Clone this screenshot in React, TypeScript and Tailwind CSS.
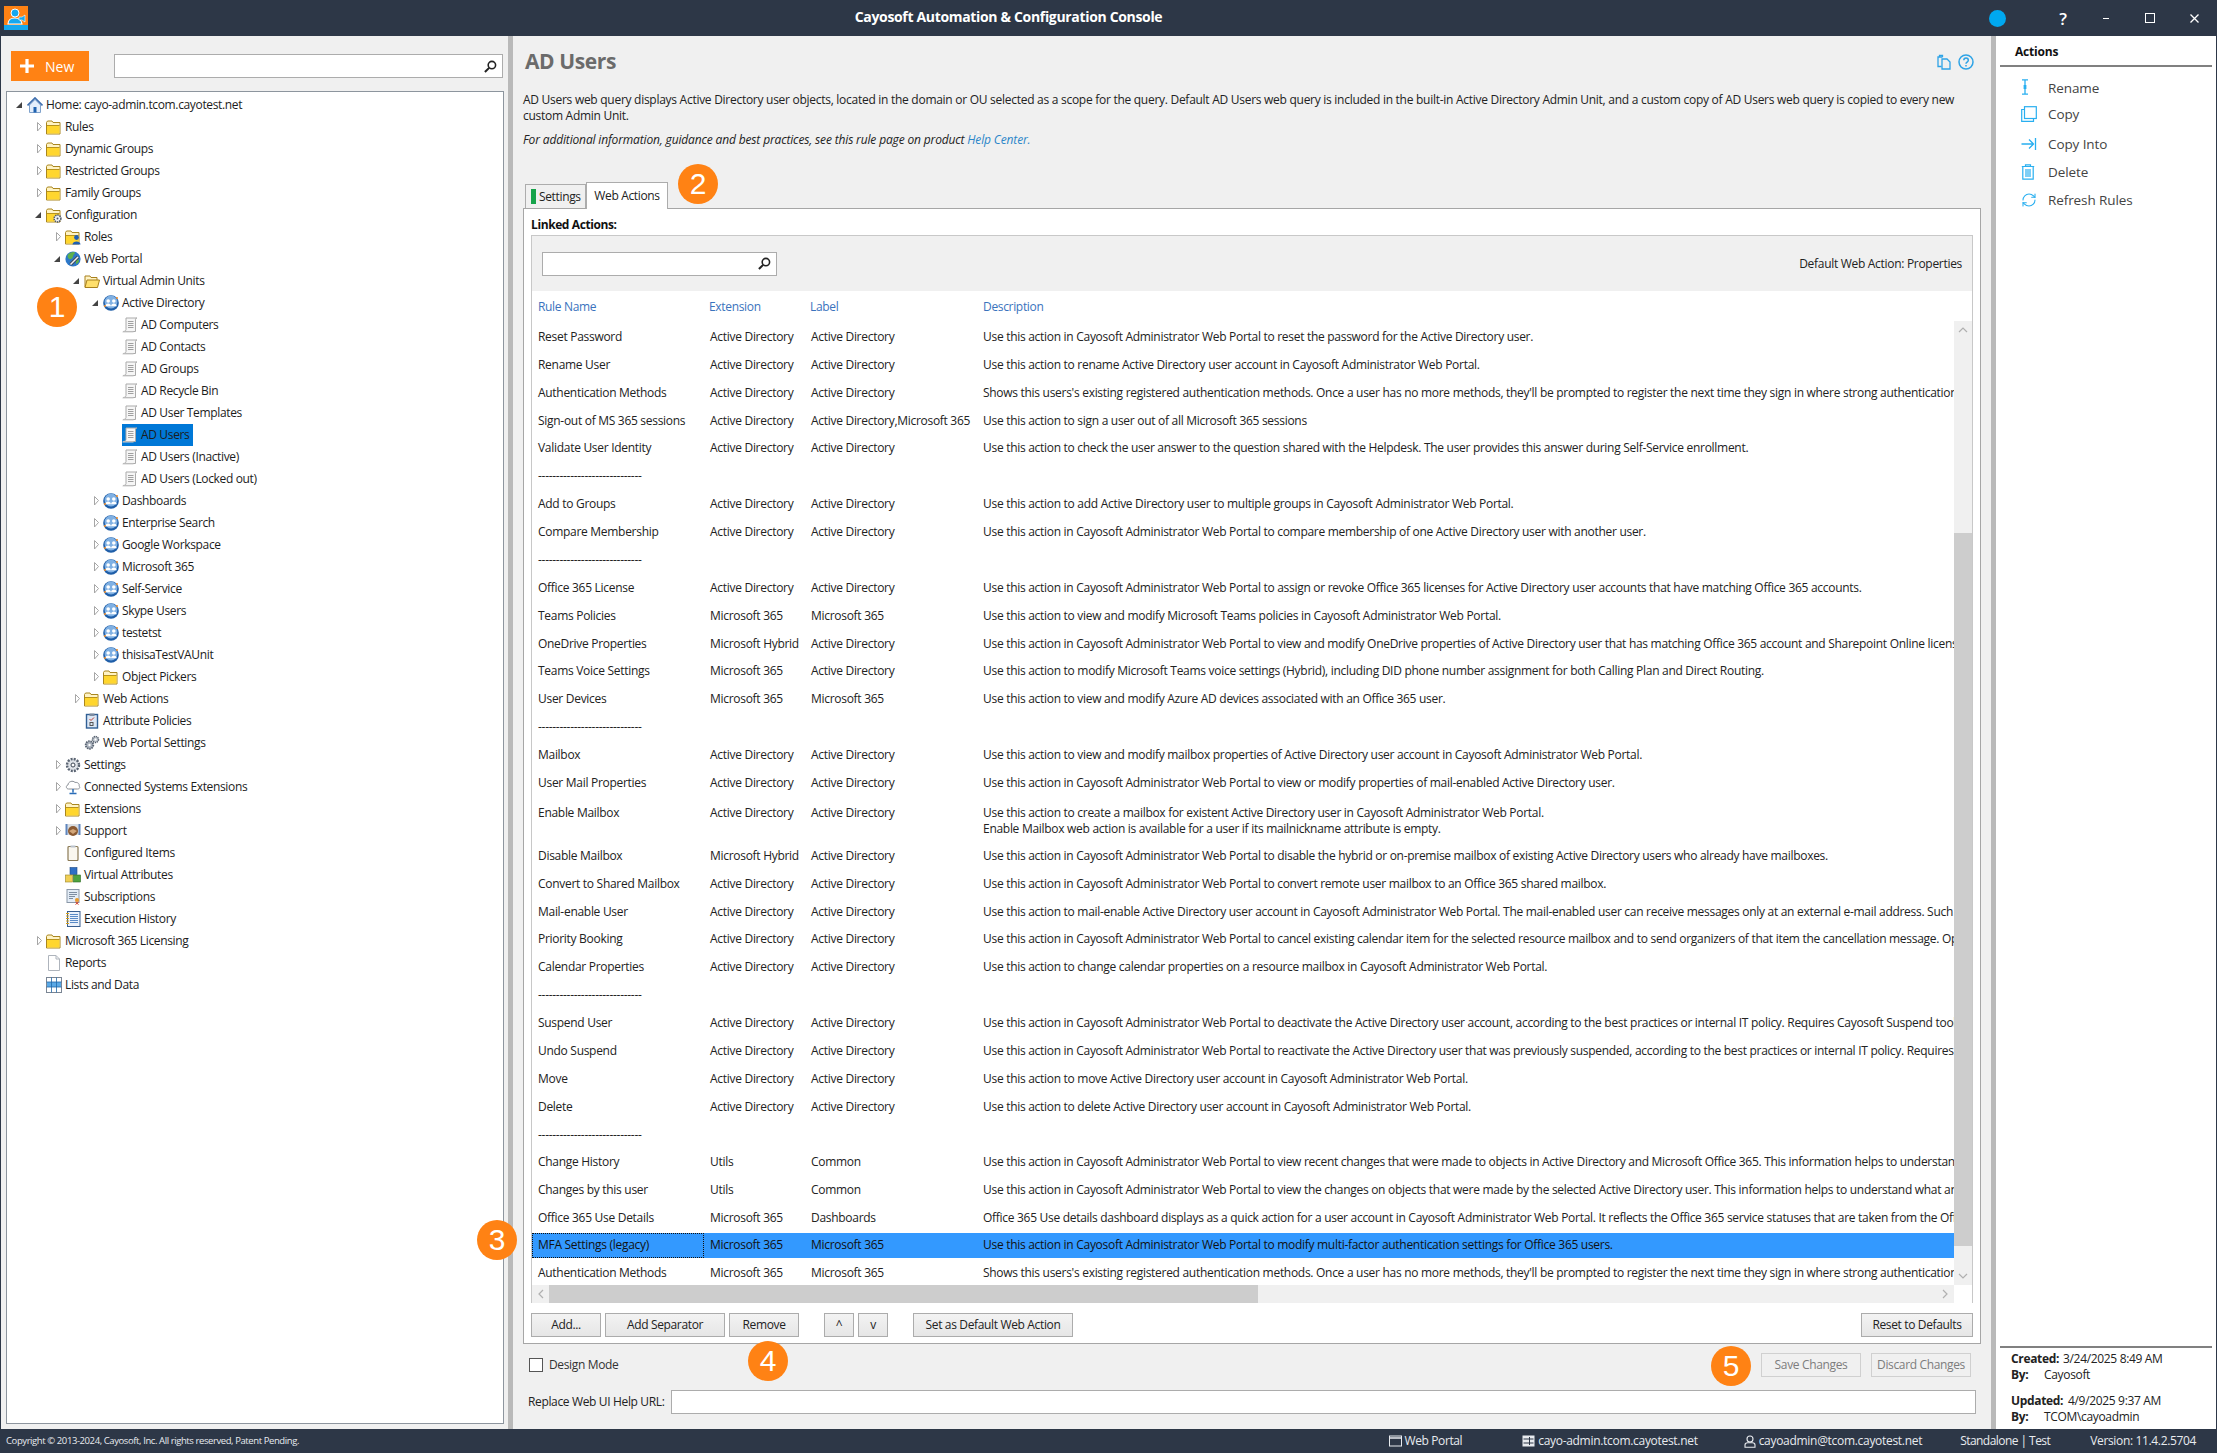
import { RefreshCw } from "lucide-react";
import type { ReactNode } from "react";

const FONT = "font-['Open_Sans','Noto_Sans',sans-serif]";

type IconName =
  | "home" | "folder" | "folderGear" | "folderUser" | "folderOpen" | "globeTool" | "group" | "scroll"
  | "policy" | "gears" | "gear" | "cloud" | "support" | "clipboard" | "cubes" | "cert" | "notebook"
  | "page" | "grid";

type TreeItem = { level: number; arrow?: "open" | "closed"; icon: IconName; text: string; selected?: boolean };

const tree: TreeItem[] = [
  { level: 0, arrow: "open", icon: "home", text: "Home: cayo-admin.tcom.cayotest.net" },
  { level: 1, arrow: "closed", icon: "folder", text: "Rules" },
  { level: 1, arrow: "closed", icon: "folder", text: "Dynamic Groups" },
  { level: 1, arrow: "closed", icon: "folder", text: "Restricted Groups" },
  { level: 1, arrow: "closed", icon: "folder", text: "Family Groups" },
  { level: 1, arrow: "open", icon: "folderGear", text: "Configuration" },
  { level: 2, arrow: "closed", icon: "folderUser", text: "Roles" },
  { level: 2, arrow: "open", icon: "globeTool", text: "Web Portal" },
  { level: 3, arrow: "open", icon: "folderOpen", text: "Virtual Admin Units" },
  { level: 4, arrow: "open", icon: "group", text: "Active Directory" },
  { level: 5, icon: "scroll", text: "AD Computers" },
  { level: 5, icon: "scroll", text: "AD Contacts" },
  { level: 5, icon: "scroll", text: "AD Groups" },
  { level: 5, icon: "scroll", text: "AD Recycle Bin" },
  { level: 5, icon: "scroll", text: "AD User Templates" },
  { level: 5, icon: "scroll", text: "AD Users", selected: true },
  { level: 5, icon: "scroll", text: "AD Users (Inactive)" },
  { level: 5, icon: "scroll", text: "AD Users (Locked out)" },
  { level: 4, arrow: "closed", icon: "group", text: "Dashboards" },
  { level: 4, arrow: "closed", icon: "group", text: "Enterprise Search" },
  { level: 4, arrow: "closed", icon: "group", text: "Google Workspace" },
  { level: 4, arrow: "closed", icon: "group", text: "Microsoft 365" },
  { level: 4, arrow: "closed", icon: "group", text: "Self-Service" },
  { level: 4, arrow: "closed", icon: "group", text: "Skype Users" },
  { level: 4, arrow: "closed", icon: "group", text: "testetst" },
  { level: 4, arrow: "closed", icon: "group", text: "thisisaTestVAUnit" },
  { level: 4, arrow: "closed", icon: "folder", text: "Object Pickers" },
  { level: 3, arrow: "closed", icon: "folder", text: "Web Actions" },
  { level: 3, icon: "policy", text: "Attribute Policies" },
  { level: 3, icon: "gears", text: "Web Portal Settings" },
  { level: 2, arrow: "closed", icon: "gear", text: "Settings" },
  { level: 2, arrow: "closed", icon: "cloud", text: "Connected Systems Extensions" },
  { level: 2, arrow: "closed", icon: "folder", text: "Extensions" },
  { level: 2, arrow: "closed", icon: "support", text: "Support" },
  { level: 2, icon: "clipboard", text: "Configured Items" },
  { level: 2, icon: "cubes", text: "Virtual Attributes" },
  { level: 2, icon: "cert", text: "Subscriptions" },
  { level: 2, icon: "notebook", text: "Execution History" },
  { level: 1, arrow: "closed", icon: "folder", text: "Microsoft 365 Licensing" },
  { level: 1, icon: "page", text: "Reports" },
  { level: 1, icon: "grid", text: "Lists and Data" },
];

const levelPad = ["pl-[5px]", "pl-[24px]", "pl-[43px]", "pl-[62px]", "pl-[81px]", "pl-[100px]"];

const P = "Cayosoft Administrator Web Portal";
const AD = "Active Directory";
const M = "Microsoft 365";
const SEP = "-----------------------------";

type Row = { name: string; ext?: string; label?: string; desc?: ReactNode; tall?: boolean; selected?: boolean };

const AUTH = "Shows this users's existing registered authentication methods. Once a user has no more methods, they'll be prompted to register the next time they sign in where strong authentication is required.";

const rows: Row[] = [
  { name: "Reset Password", ext: AD, label: AD, desc: `Use this action in ${P} to reset the password for the Active Directory user.` },
  { name: "Rename User", ext: AD, label: AD, desc: `Use this action to rename Active Directory user account in ${P}.` },
  { name: "Authentication Methods", ext: AD, label: AD, desc: AUTH },
  { name: "Sign-out of MS 365 sessions", ext: AD, label: "Active Directory,Microsoft 365", desc: "Use this action to sign a user out of all Microsoft 365 sessions" },
  { name: "Validate User Identity", ext: AD, label: AD, desc: "Use this action to check the user answer to the question shared with the Helpdesk. The user provides this answer during Self-Service enrollment." },
  { name: SEP },
  { name: "Add to Groups", ext: AD, label: AD, desc: `Use this action to add Active Directory user to multiple groups in ${P}.` },
  { name: "Compare Membership", ext: AD, label: AD, desc: `Use this action in ${P} to compare membership of one Active Directory user with another user.` },
  { name: SEP },
  { name: "Office 365 License", ext: AD, label: AD, desc: `Use this action in ${P} to assign or revoke Office 365 licenses for Active Directory user accounts that have matching Office 365 accounts.` },
  { name: "Teams Policies", ext: M, label: M, desc: `Use this action to view and modify Microsoft Teams policies in ${P}.` },
  { name: "OneDrive Properties", ext: "Microsoft Hybrid", label: AD, desc: `Use this action in ${P} to view and modify OneDrive properties of Active Directory user that has matching Office 365 account and Sharepoint Online license.` },
  { name: "Teams Voice Settings", ext: M, label: AD, desc: "Use this action to modify Microsoft Teams voice settings (Hybrid), including DID phone number assignment for both Calling Plan and Direct Routing." },
  { name: "User Devices", ext: M, label: M, desc: "Use this action to view and modify Azure AD devices associated with an Office 365 user." },
  { name: SEP },
  { name: "Mailbox", ext: AD, label: AD, desc: `Use this action to view and modify mailbox properties of Active Directory user account in ${P}.` },
  { name: "User Mail Properties", ext: AD, label: AD, desc: `Use this action in ${P} to view or modify properties of mail-enabled Active Directory user.` },
  {
    name: "Enable Mailbox", ext: AD, label: AD, tall: true,
    desc: (
      <>
        Use this action to create a mailbox for existent Active Directory user in {P}.
        <br />
        Enable Mailbox web action is available for a user if its mailnickname attribute is empty.
      </>
    ),
  },
  { name: "Disable Mailbox", ext: "Microsoft Hybrid", label: AD, desc: `Use this action in ${P} to disable the hybrid or on-premise mailbox of existing Active Directory users who already have mailboxes.` },
  { name: "Convert to Shared Mailbox", ext: AD, label: AD, desc: `Use this action in ${P} to convert remote user mailbox to an Office 365 shared mailbox.` },
  { name: "Mail-enable User", ext: AD, label: AD, desc: `Use this action to mail-enable Active Directory user account in ${P}. The mail-enabled user can receive messages only at an external e-mail address. Such users` },
  { name: "Priority Booking", ext: AD, label: AD, desc: `Use this action in ${P} to cancel existing calendar item for the selected resource mailbox and to send organizers of that item the cancellation message. Optionally` },
  { name: "Calendar Properties", ext: AD, label: AD, desc: `Use this action to change calendar properties on a resource mailbox in ${P}.` },
  { name: SEP },
  { name: "Suspend User", ext: AD, label: AD, desc: `Use this action in ${P} to deactivate the Active Directory user account, according to the best practices or internal IT policy. Requires Cayosoft Suspend tool` },
  { name: "Undo Suspend", ext: AD, label: AD, desc: `Use this action in ${P} to reactivate the Active Directory user that was previously suspended, according to the best practices or internal IT policy. Requires Cayosoft` },
  { name: "Move", ext: AD, label: AD, desc: `Use this action to move Active Directory user account in ${P}.` },
  { name: "Delete", ext: AD, label: AD, desc: `Use this action to delete Active Directory user account in ${P}.` },
  { name: SEP },
  { name: "Change History", ext: "Utils", label: "Common", desc: `Use this action in ${P} to view recent changes that were made to objects in Active Directory and Microsoft Office 365. This information helps to understand what` },
  { name: "Changes by this user", ext: "Utils", label: "Common", desc: `Use this action in ${P} to view the changes on objects that were made by the selected Active Directory user. This information helps to understand what and` },
  { name: "Office 365 Use Details", ext: M, label: "Dashboards", desc: `Office 365 Use details dashboard displays as a quick action for a user account in ${P}. It reflects the Office 365 service statuses that are taken from the Office` },
  { name: "MFA Settings (legacy)", ext: M, label: M, selected: true, desc: `Use this action in ${P} to modify multi-factor authentication settings for Office 365 users.` },
  { name: "Authentication Methods", ext: M, label: M, desc: AUTH },
];

function TreeIcon({ name }: { name: IconName }) {
  const folder = (
    <>
      <path d="M.5 3.500V15h13.500V3.500H7L6 2H1.500z" fill="#fff3c4" stroke="#a9861f" />
      <rect x="1" y="7" width="12.500" height="7.500" fill="#ffd62e" />
      <path d="M1 6.500h12.500" stroke="#b8941e" />
    </>
  );
  switch (name) {
    case "home":
      return (
        <svg viewBox="0 0 16 16" className="h-4 w-4">
          <path d="M2.500 8v7.500h11V8L8 2.500z" fill="#e4eefb" stroke="#7fa2cc" />
          <path d="M.5 8.500 8 1l7.500 7.500" fill="none" stroke="#3f6fae" strokeWidth="1.700" />
          <rect x="6.500" y="10" width="3" height="5.500" fill="#1f62b0" />
        </svg>
      );
    case "folder":
      return <svg viewBox="0 0 16 16" className="h-4 w-4">{folder}</svg>;
    case "folderGear":
      return (
        <svg viewBox="0 0 16 16" className="h-4 w-4">
          {folder}
          <circle cx="11.500" cy="11.500" r="3.400" fill="#eef1f5" stroke="#4a5568" strokeWidth="1.500" strokeDasharray="1.400 .8" />
          <circle cx="11.500" cy="11.500" r="1" fill="#4a5568" />
        </svg>
      );
    case "folderUser":
      return (
        <svg viewBox="0 0 16 16" className="h-4 w-4">
          {folder}
          <circle cx="11.500" cy="8.500" r="2.400" fill="#1f5fb4" />
          <path d="M7.500 15.500c0-4 8-4 8 0z" fill="#1f5fb4" />
        </svg>
      );
    case "folderOpen":
      return (
        <svg viewBox="0 0 16 16" className="h-4 w-4">
          <path d="M1 14V3h5l1 1.500h6V7" fill="#fff3c4" stroke="#a8801c" />
          <path d="M1 14.500 3 7h12.500l-2 7.500z" fill="#ffdf6b" stroke="#a8801c" />
        </svg>
      );
    case "globeTool":
      return (
        <svg viewBox="0 0 16 16" className="h-4 w-4">
          <circle cx="8" cy="8" r="7.600" fill="#2c78c9" />
          <path d="M3 3.500c2-2 5-3 7-2 0 2-2 2-2 4S5 9 4 8 2 6 3 3.500zM11 9c2-1 3 0 3 1s-2 3-3 3z" fill="#5cb04e" />
          <path d="M5.500 13.500 13 6" stroke="#3f4a58" strokeWidth="3.200" />
          <path d="M5.500 13.500 13 6" stroke="#eef0f3" strokeWidth="1.400" />
        </svg>
      );
    case "group":
      return (
        <svg viewBox="0 0 16 16" className="h-4 w-4">
          <circle cx="8" cy="8" r="7.800" fill="#1f5ea8" />
          <circle cx="8" cy="7" r="6.400" fill="#7fb0e3" />
          <circle cx="5.200" cy="6" r="1.800" fill="#fff" />
          <circle cx="10.800" cy="6" r="1.800" fill="#fff" />
          <path d="M2.300 11.200c0-3.700 5.600-3.700 5.600 0zM8.100 11.200c0-3.700 5.600-3.700 5.600 0z" fill="#fff" />
          <circle cx="14" cy="3" r="1" fill="#f28c28" />
          <circle cx="2" cy="11" r="1" fill="#f28c28" />
        </svg>
      );
    case "scroll":
      return (
        <svg viewBox="0 0 16 16" className="h-4 w-4">
          <path d="M4 1h11c-1.200 0-1.500 1-1.500 2v11.500H1c1.500 0 3-.5 3-2z" fill="#f6f6f6" stroke="#aaa" />
          <path d="M6 4.500h5.500M6 6.500h5.500M6 8.500h5.500M6 10.500h5.500" stroke="#a0a0a0" />
          <path d="M.5 15h11" stroke="#cfcfcf" />
        </svg>
      );
    case "policy":
      return (
        <svg viewBox="0 0 16 16" className="h-4 w-4">
          <rect x="2.500" y="1.500" width="11" height="13.500" fill="#dbe7f5" stroke="#305f95" strokeWidth="1.400" />
          <rect x="5.500" y=".5" width="5" height="2.500" fill="#7c8ba0" />
          <path d="M5.500 6l1.500 1.500L10 4.500" fill="none" stroke="#c0392b" />
          <rect x="6" y="9.500" width="3" height="3" fill="none" stroke="#555" />
        </svg>
      );
    case "gears":
      return (
        <svg viewBox="0 0 16 16" className="h-4 w-4">
          <circle cx="5.500" cy="10" r="3.800" fill="#aab2bd" stroke="#5a6472" strokeWidth="1.800" strokeDasharray="1.500 .8" />
          <circle cx="11.500" cy="4.500" r="3" fill="#c1c7cf" stroke="#5a6472" strokeWidth="1.500" strokeDasharray="1.300 .7" />
          <circle cx="5.500" cy="10" r="1.200" fill="#fff" />
          <circle cx="11.500" cy="4.500" r="1" fill="#fff" />
        </svg>
      );
    case "gear":
      return (
        <svg viewBox="0 0 16 16" className="h-4 w-4">
          <circle cx="8" cy="8" r="6" fill="#dfe3e8" stroke="#5a6472" strokeWidth="2.400" strokeDasharray="2 1.140" />
          <circle cx="8" cy="8" r="2" fill="#fff" stroke="#3d4653" />
        </svg>
      );
    case "cloud":
      return (
        <svg viewBox="0 0 16 16" className="h-4 w-4">
          <path d="M3.500 10C1 10 .5 6.500 3 6c0-3.500 5-5 7-2.500C12.500 2.800 15 5 14 7c1.500 1.500.5 3-1.500 3z" fill="#fff" stroke="#8a8f96" />
          <path d="M8 10v3.500M4.500 14.500h7" stroke="#2a6db8" strokeWidth="1.500" />
        </svg>
      );
    case "support":
      return (
        <svg viewBox="0 0 16 16" className="h-4 w-4">
          <rect x=".5" y="1" width="15" height="11" fill="#5f85bd" />
          <rect x="2.500" y="1" width="11" height="11" fill="#d8dde3" />
          <circle cx="8" cy="8" r="5" fill="#8a5a33" />
          <path d="M4 8l4-2 4 2-4 3z" fill="#d2a679" />
        </svg>
      );
    case "clipboard":
      return (
        <svg viewBox="0 0 16 16" className="h-4 w-4">
          <rect x="3" y="1.500" width="10" height="14" rx="1" fill="#faf7ef" stroke="#8b7a55" strokeWidth="1.200" />
          <rect x="5.500" y=".5" width="5" height="2" fill="#b9c2cc" />
        </svg>
      );
    case "cubes":
      return (
        <svg viewBox="0 0 16 16" className="h-4 w-4">
          <rect x="5" y=".5" width="7" height="7" fill="#2f6fc4" stroke="#1f4a85" strokeWidth=".6" />
          <rect x=".5" y="8" width="7" height="7" fill="#f0cf55" stroke="#9c8526" strokeWidth=".6" />
          <rect x="8.500" y="8" width="7" height="7" fill="#4ea33f" stroke="#2c6a22" strokeWidth=".6" />
        </svg>
      );
    case "cert":
      return (
        <svg viewBox="0 0 16 16" className="h-4 w-4">
          <rect x="2" y=".5" width="12" height="13" fill="#e3ecf6" stroke="#8a97a8" />
          <path d="M4 3.500h8M4 5.500h8M4 7.500h6M4 9.500h4" stroke="#7d8da1" />
          <circle cx="12" cy="11" r="2" fill="#e89a2c" />
          <path d="M10.500 13l3 2.500m0-2.500l-3 2.500" stroke="#d23c2a" />
        </svg>
      );
    case "notebook":
      return (
        <svg viewBox="0 0 16 16" className="h-4 w-4">
          <rect x="2.500" y=".5" width="12.500" height="15" fill="#eaf1fb" stroke="#395f91" />
          <path d="M5 3.500h8M5 5.500h8M5 7.500h8M5 9.500h8M5 11.500h8" stroke="#5a8ac6" />
          <path d="M1 2.500h3M1 5h3M1 7.500h3M1 10h3M1 12.500h3" stroke="#d9a11c" />
        </svg>
      );
    case "page":
      return (
        <svg viewBox="0 0 16 16" className="h-4 w-4">
          <path d="M2.500.5h7.500l3.500 3.500v11.500h-11z" fill="#fff" stroke="#aeb4bc" />
          <path d="M10 .5V4h3.500" fill="none" stroke="#aeb4bc" />
        </svg>
      );
    case "grid":
      return (
        <svg viewBox="0 0 16 16" className="h-4 w-4">
          <rect x=".5" y=".5" width="15" height="15" fill="#fff" stroke="#7b8694" />
          <rect x="1" y="5" width="14" height="5" fill="#5aa9e6" />
          <path d="M5.500.5v15M10.500.5v15M.5 5h15M.5 10h15" stroke="#2268a8" strokeWidth=".8" />
        </svg>
      );
  }
}

function TreeRow({ item }: { item: TreeItem }) {
  return (
    <div className={`flex h-[22px] items-center ${levelPad[item.level]}`}>
      <span className="flex w-[15px] shrink-0 items-center">
        {item.arrow === "open" && (
          <svg viewBox="0 0 15 12" className="h-3 w-[15px]">
            <path d="M4 9h6V3z" fill="#444" />
          </svg>
        )}
        {item.arrow === "closed" && (
          <svg viewBox="0 0 15 12" className="h-3 w-[15px]">
            <path d="M6.500 1.500l4 4-4 4.500z" fill="#fff" stroke="#a6a6a6" />
          </svg>
        )}
      </span>
      <span className={`flex h-[22px] items-center ${item.selected ? "bg-[#0078d7] pr-[4px]" : ""}`}>
        <span className="flex w-[19px] shrink-0">
          <TreeIcon name={item.icon} />
        </span>
        <span className="whitespace-nowrap text-[12px] leading-none tracking-[-0.35px] text-[#1c1c1c]">{item.text}</span>
      </span>
    </div>
  );
}

function SearchBox({ className }: { className: string }) {
  return (
    <div className={`flex h-6 items-center justify-end border border-[#acacac] bg-white pr-[5px] ${className}`}>
      <svg viewBox="0 0 14 14" className="h-[13px] w-[13px]">
        <circle cx="8.500" cy="5.500" r="4" fill="none" stroke="#222" strokeWidth="1.700" />
        <path d="M5.500 8.500 1 13" stroke="#222" strokeWidth="2.200" />
      </svg>
    </div>
  );
}

function Btn({ className, children, disabled }: { className: string; children: ReactNode; disabled?: boolean }) {
  return (
    <button
      className={`flex h-6 shrink-0 items-center justify-center border text-[12px] tracking-[-0.35px] ${
        disabled
          ? "border-[#d0d0d0] bg-[#f0f0f0] text-[#7d7d7d]"
          : "border-[#acacac] bg-gradient-to-b from-[#f3f3f3] to-[#e6e6e6] text-[#222]"
      } ${className}`}
    >
      {children}
    </button>
  );
}

function Badge({ n, className }: { n: number; className: string }) {
  return (
    <div
      className={`absolute flex h-10 w-10 items-center justify-center rounded-full bg-[#ff8214] font-['Liberation_Sans',sans-serif] text-[30px] leading-none text-white ${className}`}
    >
      {n}
    </div>
  );
}

function ActionRow({ icon, text, className }: { icon: ReactNode; text: string; className?: string }) {
  return (
    <div className={`flex h-[26px] items-center ${className ?? ""}`}>
      <span className="flex w-[27px] shrink-0 justify-start">{icon}</span>
      <span className="text-[13.5px] tracking-[-0.1px] text-[#444]">{text}</span>
    </div>
  );
}

export default function App() {
  return (
    <div className={`relative flex h-[1453px] w-[2217px] flex-col overflow-hidden bg-[#f0f0f0] ${FONT}`}>
      {/* title bar */}
      <div className="flex h-9 shrink-0 items-center bg-[#2d3747] pl-1 text-white">
        <svg viewBox="0 0 24 24" className="h-6 w-6 shrink-0">
          <rect width="24" height="24" fill="#ff8214" />
          <rect y="19" width="24" height="5" fill="#16a8ee" />
          <circle cx="11" cy="7" r="4" fill="#16a8ee" stroke="#fff" strokeWidth="1" />
          <path d="M4 18c0-8 13-8 14 0z" fill="#16a8ee" stroke="#fff" strokeWidth="1.200" />
          <path d="M15 11h3l3-2v7l-3-2h-3z" fill="#16a8ee" stroke="#fff" strokeWidth=".6" />
        </svg>
        <div className="flex-1 pb-[3px] text-center text-[14px] font-bold tracking-[-0.33px]">Cayosoft Automation &amp; Configuration Console</div>
        <div className="flex w-[228px] shrink-0 items-center">
          <span className="h-[17px] w-[17px] rounded-full bg-[#00a8f0]" />
          <span className="ml-[50px] w-[14px] text-center text-[17px] font-semibold leading-none">?</span>
          <span className="ml-[30px] h-px w-[6px] translate-x-[3px] bg-white" />
          <span className="ml-[39px] h-[10px] w-[10px] border-[1.500px] border-white" />
          <svg viewBox="0 0 9 9" className="ml-[35px] h-[9px] w-[9px]">
            <path d="M.5.5l8 8m0-8l-8 8" stroke="#fff" strokeWidth="1.300" />
          </svg>
        </div>
      </div>

      <div className="flex min-h-0 flex-1">
        {/* left panel */}
        <div className="flex w-[508px] shrink-0 flex-col border-l border-[#2d3747] pb-[5px] pl-[5px] pr-[4px] pt-[15px]">
          <div className="flex h-[30px] shrink-0 items-start pl-[5px]">
            <button className="flex h-[30px] w-[78px] items-center bg-[#ff8214] pl-2 text-[14px] text-white">
              <svg viewBox="0 0 16 16" className="h-4 w-4">
                <path d="M8 1v14M1 8h14" stroke="#fff" strokeWidth="3.200" />
              </svg>
              <span className="ml-[10px]">New</span>
            </button>
            <SearchBox className="ml-[25px] mt-[3px] w-[389px]" />
          </div>
          <div className="mt-[10px] flex-1 border border-[#8d959e] bg-white pt-[2px]">
            {tree.map((item, i) => (
              <TreeRow key={i} item={item} />
            ))}
          </div>
        </div>

        <div className="w-[5px] shrink-0 bg-[#b9b9b9]" />

        {/* main */}
        <div className="flex w-[1478px] shrink-0 flex-col px-[10px]">
          <div className="mt-[12px] flex h-[28px] shrink-0 items-center justify-between pl-[2px] pr-[7px]">
            <h1 className="text-[21px] font-bold tracking-[-0.4px] text-[#6b6b6b]">AD Users</h1>
            <div className="flex items-center gap-[6px]">
              <svg viewBox="0 0 16 16" className="h-4 w-4" fill="none" stroke="#2ea3e6" strokeWidth="1.300">
                <path d="M6.500 3H2v9.500h3.500" />
                <path d="M3.500 3V1.500h3V3" />
                <path d="M6 5h5l3 3v7H6z" fill="#f0f0f0" />
              </svg>
              <svg viewBox="0 0 16 16" className="h-4 w-4" fill="none" stroke="#2ea3e6">
                <circle cx="8" cy="8" r="7" strokeWidth="1.500" />
                <path d="M5.800 6.200c0-3 4.500-3 4.500 0 0 2-2.300 1.800-2.300 3.600" strokeWidth="1.500" />
                <path d="M8 11v1.500" strokeWidth="1.500" />
              </svg>
            </div>
          </div>

          <p className="mt-[16px] w-[1436px] text-[12px] leading-4 tracking-[-0.275px] text-[#222]">
            AD Users web query displays Active Directory user objects, located in the domain or OU selected as a scope for the query. Default AD Users web query is included in the built-in Active Directory Admin Unit, and a custom copy of AD Users web query is copied to every new custom Admin Unit.
          </p>
          <p className="mt-2 text-[12px] italic leading-4 tracking-[-0.15px] text-[#222]">
            For additional information, guidance and best practices, see this rule page on product <span className="text-[#2b86c9]">Help Center.</span>
          </p>

          {/* tabs */}
          <div className="mt-[34px] flex h-[26px] shrink-0 items-end pl-[2px]">
            <div className="flex h-6 w-[61px] items-center border border-b-0 border-[#acacac] bg-[#f0f0f0] pl-[5px]">
              <span className="h-[15px] w-[5px] bg-[#16a34a]" />
              <span className="ml-[3px] text-[12px] tracking-[-0.35px] text-[#222]">Settings</span>
            </div>
            <div className="relative z-10 -mb-px flex h-[27px] w-[82px] items-center justify-center border border-b-0 border-[#acacac] bg-white">
              <span className="text-[12px] tracking-[-0.35px] text-[#222]">Web Actions</span>
            </div>
          </div>

          <div className="flex h-[1136px] shrink-0 flex-col border border-[#a6a6a6] bg-white px-[7px] pt-[8px]">
            <div className="h-4 text-[12px] font-bold leading-4 tracking-[-0.4px] text-[#111]">Linked Actions:</div>
            <div className="mt-[2px] flex h-[1068px] flex-col border border-[#c8c8c8]">
              <div className="flex h-[55px] shrink-0 items-center justify-between bg-[#f0f0f0] pl-[10px] pr-[10px]">
                <SearchBox className="w-[235px]" />
                <span className="text-[12px] tracking-[-0.3px] text-[#222]">Default Web Action: Properties</span>
              </div>
              <div className="grid h-[30px] shrink-0 grid-cols-[177px_102px_172px_1fr] items-center pt-[2px] text-[12px] tracking-[-0.33px] text-[#3a73bd]">
                <span className="pl-[6px]">Rule Name</span>
                <span>Extension</span>
                <span className="-ml-px">Label</span>
                <span>Description</span>
              </div>

              <div className="flex h-[964px] shrink-0">
                <div className="min-w-0 flex-1 overflow-hidden pt-[2px] text-[12px] leading-4 tracking-[-0.29px] text-[#222]">
                  {rows.map((r, i) => (
                    <div
                      key={i}
                      className={`flex ${
                        r.tall ? "h-[45px] items-start pt-[8px]" : r.selected ? "h-[26.500px] items-center" : "h-[27.880px] items-center"
                      }`}
                    >
                      <div
                        className={`grid w-full grid-cols-[177px_102px_172px_1fr] ${
                          r.selected ? "h-[25px] items-stretch bg-[#3399ff] text-[#111]" : ""
                        }`}
                      >
                        <span className={`relative overflow-hidden whitespace-nowrap pl-[6px] ${r.selected ? "flex items-center" : ""}`}>
                          {r.selected && (
                            <span className="absolute inset-y-0 left-0 w-[172px] border border-dotted border-[#111]" />
                          )}
                          {r.name}
                        </span>
                        <span className={`whitespace-nowrap pl-px ${r.selected ? "flex items-center" : ""}`}>{r.ext}</span>
                        <span className={`whitespace-nowrap ${r.selected ? "flex items-center" : ""}`}>{r.label}</span>
                        <span className={`overflow-hidden whitespace-nowrap ${r.selected ? "flex items-center" : ""}`}>{r.desc}</span>
                      </div>
                    </div>
                  ))}
                </div>
                {/* vertical scrollbar */}
                <div className="flex w-[18px] shrink-0 flex-col bg-[#f0f0f0]">
                  <div className="flex h-[18px] shrink-0 items-center justify-center">
                    <svg viewBox="0 0 10 6" className="h-[6px] w-[10px]">
                      <path d="M1 5l4-4 4 4" fill="none" stroke="#b0b0b0" strokeWidth="1.200" />
                    </svg>
                  </div>
                  <div className="h-[194px] shrink-0" />
                  <div className="h-[713px] shrink-0 bg-[#cdcdcd]" />
                  <div className="flex-1" />
                  <div className="flex h-[18px] shrink-0 items-center justify-center">
                    <svg viewBox="0 0 10 6" className="h-[6px] w-[10px]">
                      <path d="M1 1l4 4 4-4" fill="none" stroke="#b0b0b0" strokeWidth="1.200" />
                    </svg>
                  </div>
                </div>
              </div>

              {/* horizontal scrollbar */}
              <div className="flex h-[18px] shrink-0">
                <div className="flex min-w-0 flex-1 bg-[#f0f0f0]">
                  <div className="flex w-[17px] shrink-0 items-center justify-center">
                    <svg viewBox="0 0 6 10" className="h-[10px] w-[6px]">
                      <path d="M5 1 1 5l4 4" fill="none" stroke="#b0b0b0" strokeWidth="1.200" />
                    </svg>
                  </div>
                  <div className="w-[709px] shrink-0 bg-[#cdcdcd]" />
                  <div className="flex flex-1 items-center justify-end pr-[6px]">
                    <svg viewBox="0 0 6 10" className="h-[10px] w-[6px]">
                      <path d="M1 1l4 4-4 4" fill="none" stroke="#b0b0b0" strokeWidth="1.200" />
                    </svg>
                  </div>
                </div>
                <div className="w-[18px] shrink-0 bg-white" />
              </div>
            </div>

            <div className="mt-[10px] flex items-center">
              <Btn className="w-[70px]">Add...</Btn>
              <Btn className="ml-1 w-[120px]">Add Separator</Btn>
              <Btn className="ml-1 w-[70px]">Remove</Btn>
              <Btn className="ml-[25px] w-[30px]">^</Btn>
              <Btn className="ml-1 w-[30px]">v</Btn>
              <Btn className="ml-[25px] w-[160px]">Set as Default Web Action</Btn>
              <Btn className="ml-auto w-[112px]">Reset to Defaults</Btn>
            </div>
          </div>

          <div className="flex h-[46px] shrink-0 items-center justify-between pb-[4px] pl-[6px] pr-[10px]">
            <label className="flex items-center">
              <span className="h-[14px] w-[14px] border border-[#555] bg-white" />
              <span className="ml-[6px] text-[12px] tracking-[-0.35px] text-[#333]">Design Mode</span>
            </label>
            <div className="flex gap-[10px]">
              <Btn disabled className="w-[100px]">Save Changes</Btn>
              <Btn disabled className="w-[100px]">Discard Changes</Btn>
            </div>
          </div>
          <div className="flex h-6 shrink-0 items-center justify-between pl-[5px] pr-[5px]">
            <span className="text-[12px] tracking-[-0.35px] text-[#222]">Replace Web UI Help URL:</span>
            <div className="h-6 w-[1305px] border border-[#acacac] bg-white" />
          </div>
        </div>

        <div className="w-[5px] shrink-0 bg-[#b9b9b9]" />

        {/* actions panel */}
        <div className="flex min-w-0 flex-1 flex-col border-r border-[#2d3747] bg-white pl-[4px] pr-[4px]">
          <div className="flex h-[31px] shrink-0 items-end border-b-2 border-[#808080] pb-[5px] pl-[15px]">
            <span className="text-[12px] font-bold leading-4 tracking-[-0.2px] text-[#111]">Actions</span>
          </div>
          <div className="mt-[8px] pl-[21px]">
            <ActionRow
              text="Rename"
              icon={
                <svg viewBox="0 0 16 16" className="h-4 w-4 -translate-y-[1px]" fill="none" stroke="#29aff0" strokeWidth="1.300">
                  <path d="M1 .8h6M1 15.200h6M4 .8v14.400" />
                  <rect x="2.600" y="6" width="2.800" height="4" fill="#29aff0" stroke="none" />
                </svg>
              }
            />
            <ActionRow
              text="Copy"
              icon={
                <svg viewBox="0 0 16 16" className="h-4 w-4" fill="none" stroke="#29aff0" strokeWidth="1.200">
                  <path d="M3.500 3.500H.7v11.800h11.800v-2.800" />
                  <rect x="3.500" y=".7" width="11.800" height="11.800" />
                </svg>
              }
            />
            <ActionRow
              className="mt-1"
              text="Copy Into"
              icon={
                <svg viewBox="0 0 16 16" className="h-4 w-4" fill="none" stroke="#29aff0" strokeWidth="1.300">
                  <path d="M.5 8h12M8 3.500 12.500 8 8 12.500M14.500 2v12" />
                </svg>
              }
            />
            <ActionRow
              className="mt-[2px]"
              text="Delete"
              icon={
                <svg viewBox="0 0 16 16" className="h-4 w-4" fill="none" stroke="#29aff0" strokeWidth="1.200">
                  <path d="M.8 2.500h12.400M4.500 2.500V.8h5v1.700M1.800 2.500v12.700h10.400V2.500M5 5v8M7 5v8M9 5v8" />
                </svg>
              }
            />
            <ActionRow
              className="mt-[2px]"
              text="Refresh Rules"
              icon={<RefreshCw className="h-4 w-4 text-[#29aff0]" strokeWidth={1.6} />}
            />
          </div>
          <div className="mt-auto border-t-2 border-[#808080] pb-1 pl-[11px] pt-[3px] text-[12px] leading-4 tracking-[-0.33px] text-[#222]">
            <div className="flex">
              <b className="w-[52px] font-bold">Created:</b>
              <span>3/24/2025 8:49 AM</span>
            </div>
            <div className="flex">
              <b className="w-[33px] font-bold">By:</b>
              <span>Cayosoft</span>
            </div>
            <div className="mt-[10px] flex">
              <b className="w-[57px] font-bold">Updated:</b>
              <span>4/9/2025 9:37 AM</span>
            </div>
            <div className="flex">
              <b className="w-[33px] font-bold">By:</b>
              <span>TCOM\cayoadmin</span>
            </div>
          </div>
        </div>
      </div>

      {/* status bar */}
      <div className="flex h-6 shrink-0 items-center bg-[#2d3747] pl-[6px] pr-[21px] text-[12px] tracking-[-0.3px] text-[#e8ebef]">
        <span className="text-[9.500px] tracking-[-0.41px]">Copyright © 2013-2024, Cayosoft, Inc. All rights reserved, Patent Pending.</span>
        <div className="ml-auto flex items-center">
          <svg viewBox="0 0 13 12" className="h-3 w-[13px]" fill="none" stroke="#e8ebef">
            <rect x=".5" y="1" width="12" height="10" />
            <path d="M.5 3h12" strokeWidth="1.500" />
          </svg>
          <span className="ml-[3px] tracking-[-0.4px]">Web Portal</span>
          <svg viewBox="0 0 13 12" className="ml-[60px] h-3 w-[13px]">
            <rect x=".5" y=".5" width="12" height="11" fill="#e8ebef" />
            <path d="M1.500 4h10M1.500 8h10M7.500 2v8" stroke="#2d3747" />
          </svg>
          <span className="ml-[3px]">cayo-admin.tcom.cayotest.net</span>
          <svg viewBox="0 0 12 13" className="ml-[46px] h-[13px] w-3" fill="none" stroke="#e8ebef" strokeWidth="1.100">
            <circle cx="6" cy="4" r="3" />
            <path d="M1 12.200V10c0-1.500 1.500-2.200 2.500-2.200h5c1 0 2.500.7 2.500 2.200v2.200z" />
          </svg>
          <span className="ml-[3px]">cayoadmin@tcom.cayotest.net</span>
          <span className="ml-[38px] tracking-[-0.55px]">Standalone | Test</span>
          <span className="ml-[40px] tracking-[-0.35px]">Version: 11.4.2.5704</span>
        </div>
      </div>

      <Badge n={1} className="left-[37px] top-[287px]" />
      <Badge n={2} className="left-[678px] top-[164px]" />
      <Badge n={3} className="left-[477px] top-[1220px]" />
      <Badge n={4} className="left-[748px] top-[1341px]" />
      <Badge n={5} className="left-[1711px] top-[1346px]" />
    </div>
  );
}
